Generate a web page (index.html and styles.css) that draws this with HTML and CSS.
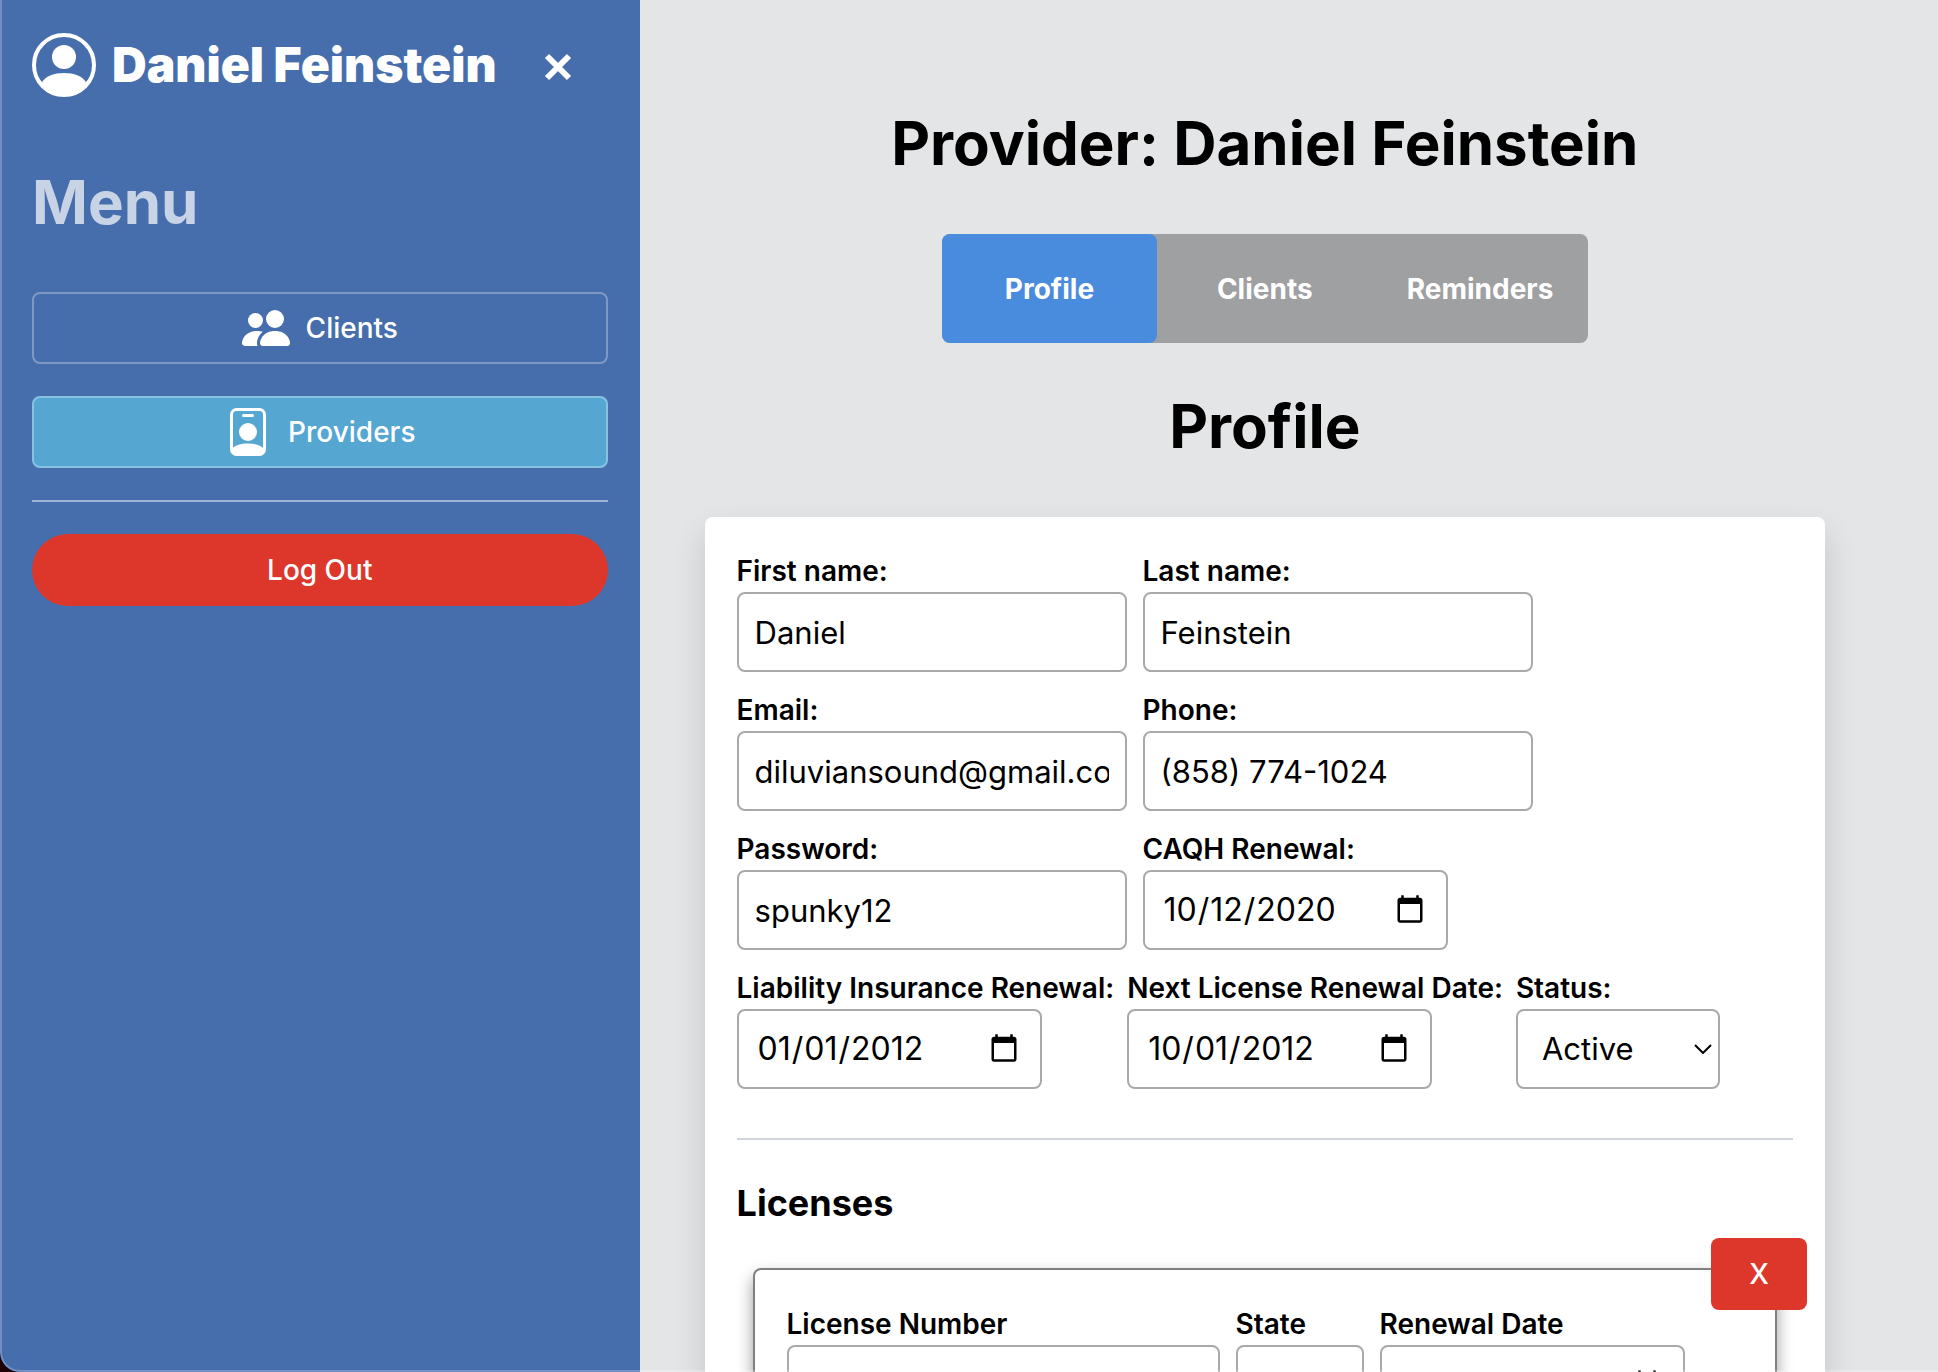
FILE: index.html
```
<!DOCTYPE html>
<html lang="en">
<head>
<meta charset="utf-8">
<meta name="viewport" content="width=device-width, initial-scale=1">
<title>Provider: Daniel Feinstein</title>
<link rel="stylesheet" href="styles.css">
</head>
<body>
<div class="app">
  <aside class="sidebar">
    <header class="account">
      <svg class="account-icon" viewBox="0 0 64 64" aria-hidden="true">
        <circle cx="32" cy="32" r="30" fill="none" stroke="currentColor" stroke-width="4"/>
        <circle cx="32" cy="24" r="12" fill="currentColor"/>
        <path d="M10 49C14 43 22 40 32 40s18 3 22 9C49 58 41 63 32 63S15 58 10 49z" fill="currentColor"/>
      </svg>
      <p class="account-name">Daniel Feinstein</p>
      <button class="close" type="button" aria-label="Close menu">
        <svg viewBox="0 0 28 32" aria-hidden="true"><path d="M3 7l22 22M25 7L3 29" stroke="currentColor" stroke-width="6" fill="none"/></svg>
      </button>
    </header>
    <h2 class="menu-title">Menu</h2>
    <nav class="menu">
      <a class="menu-item" href="#clients">
        <svg class="icon" viewBox="0 0 48 48" aria-hidden="true" fill="currentColor">
          <circle cx="33" cy="15" r="9"/>
          <circle cx="13.500" cy="16.500" r="7.500"/>
          <path d="M21 42s-3 0-3-3 3-12 15-12 15 9 15 12-3 3-3 3z"/>
          <path d="M15.600 42A6 6 0 0 1 15 39c0-4 2-8.300 5.800-11.300A15 15 0 0 0 15 27C3 27 0 36 0 39s3 3 3 3z"/>
        </svg>
        <span>Clients</span>
      </a>
      <a class="menu-item active" href="#providers" aria-current="page">
        <svg class="icon" viewBox="-6 0 48 48" aria-hidden="true">
          <rect x="1.500" y="1.500" width="33" height="45" rx="5" fill="none" stroke="currentColor" stroke-width="3"/>
          <rect x="12" y="6" width="12" height="3" rx="1.500" fill="currentColor"/>
          <circle cx="18" cy="24" r="9" fill="currentColor"/>
          <path d="M2 41c3-4 9-5.500 16-5.500S31 37 34 41v3l-3 3H5l-3-3z" fill="currentColor"/>
        </svg>
        <span>Providers</span>
      </a>
    </nav>
    <hr class="menu-rule">
    <button class="logout" type="button">Log Out</button>
  </aside>

  <main class="main">
    <h1 class="title">Provider: Daniel Feinstein</h1>
    <div class="tabs" role="tablist">
      <button class="tab selected" type="button" role="tab" aria-selected="true">Profile</button>
      <button class="tab" type="button" role="tab" aria-selected="false">Clients</button>
      <button class="tab" type="button" role="tab" aria-selected="false">Reminders</button>
    </div>
    <h2 class="title">Profile</h2>
    <form class="card">
      <div class="row">
        <div class="field"><label for="first">First name:</label><input class="control text" id="first" type="text" value="Daniel"></div>
        <div class="field"><label for="last">Last name:</label><input class="control text" id="last" type="text" value="Feinstein"></div>
      </div>
      <div class="row">
        <div class="field"><label for="email">Email:</label><input class="control text" id="email" type="email" value="diluviansound@gmail.com"></div>
        <div class="field"><label for="phone">Phone:</label><input class="control text" id="phone" type="tel" value="(858) 774-1024"></div>
      </div>
      <div class="row">
        <div class="field"><label for="password">Password:</label><input class="control text" id="password" type="text" value="spunky12"></div>
        <div class="field"><label for="caqh">CAQH Renewal:</label><input class="control date" id="caqh" type="date" value="2020-10-12"></div>
      </div>
      <div class="row row-tight">
        <div class="field"><label for="liability">Liability Insurance Renewal:</label><input class="control date" id="liability" type="date" value="2012-01-01"></div>
        <div class="field"><label for="next">Next License Renewal Date:</label><input class="control date" id="next" type="date" value="2012-10-01"></div>
        <div class="field"><label for="status">Status:</label>
          <div class="select">
            <select class="control" id="status"><option>Active</option><option>Inactive</option></select>
            <svg class="chevron" viewBox="0 0 18 10" aria-hidden="true"><path d="M1 1l8 8 8-8" fill="none" stroke="currentColor" stroke-width="2"/></svg>
          </div>
        </div>
      </div>
      <hr class="rule">
      <h3 class="section-title">Licenses</h3>
      <section class="license">
        <button class="remove" type="button" aria-label="Remove license">X</button>
        <div class="row">
          <div class="field"><label for="number">License Number</label><input class="control number" id="number" type="text"></div>
          <div class="field"><label for="state">State</label><input class="control state" id="state" type="text"></div>
          <div class="field"><label for="renewal">Renewal Date</label><input class="control date" id="renewal" type="date"></div>
        </div>
      </section>
    </form>
  </main>
</div>
</body>
</html>
```
FILE: styles.css
```
* { box-sizing: border-box; }

body {
  margin: 0;
  background: #1d0206;
  color: #000;
  font-family: Inter, "Liberation Sans", sans-serif;
  font-size: 28px;
  line-height: 40px;
}

button, input, select { font: inherit; color: inherit; }
h1, h2, h3, p { margin: 0; }

.app {
  position: relative;
  display: flex;
  height: 100vh;
  overflow: hidden;
  border-bottom-left-radius: 20px;
}

/* light edge of the window */
.app::after {
  content: "";
  position: absolute;
  inset: 0;
  border: solid rgba(255, 255, 255, 0.24);
  border-width: 0 0 2px 2px;
  border-bottom-left-radius: 20px;
  pointer-events: none;
}

.sidebar {
  flex: none;
  width: 33%;
  padding: 32px;
  background: #476eac;
  color: #fff;
  font-weight: 500;
}

.account { display: flex; align-items: center; height: 66px; }
.account-icon { flex: none; width: 64px; height: 64px; }
.account-name { margin-left: 16px; font-size: 48px; font-weight: 900; white-space: nowrap; }
.close { display: flex; margin: 0 36px 0 auto; padding: 0; border: 0; background: none; }
.close svg { width: 28px; height: 32px; }

.menu-title {
  margin: 64px 0 50px;
  color: #c8d3e6;
  font-size: 60px;
  font-weight: 700;
  line-height: 80px;
}

.menu { display: flex; flex-direction: column; gap: 32px; }
.menu-item {
  display: flex;
  align-items: center;
  justify-content: center;
  gap: 16px;
  height: 72px;
  border: 2px solid #7e99c5;
  border-radius: 8px;
  color: #fff;
  text-decoration: none;
}
.menu-item.active { background: #56a6d2; border-color: #89c1e0; }
.icon { width: 48px; height: 48px; }

.menu-rule { height: 2px; margin: 32px 0; border: 0; background: #9fb3d5; }
.logout {
  display: block;
  width: 100%;
  height: 72px;
  border: 0;
  border-radius: 36px;
  background: #dd372c;
}

.main {
  flex: 1;
  min-width: 0;
  padding: 103px 113px 0 65px;
  overflow-y: auto;
  scrollbar-width: none;
  background: #e4e5e7;
}

.title { font-size: 60px; font-weight: 700; line-height: 80px; text-align: center; }

.tabs {
  display: grid;
  grid-template-columns: repeat(3, 1fr);
  width: 646px;
  max-width: 100%;
  height: 109px;
  margin: 51px auto 43px;
  border-radius: 8px;
  background: #9fa0a2;
}
.tab { padding: 0; border: 0; border-radius: 8px; background: none; color: #fff; font-weight: 700; }
.tab.selected { background: #498cde; }

.card {
  margin-top: 51px;
  padding: 32px 32px 64px;
  border-radius: 8px;
  background: #fff;
  box-shadow: 0 16px 32px rgba(0, 0, 0, 0.14);
}

.row { display: flex; flex-wrap: wrap; gap: 16px; margin-bottom: 16px; }
.row-tight { column-gap: 13px; }
.field { display: flex; flex-direction: column; align-items: flex-start; gap: 1px; }
.field label { height: 42px; font-weight: 600; line-height: 44px; }

.control {
  height: 80px;
  padding: 0 16px;
  border: 2px solid #a9a9a9;
  border-radius: 8px;
  background: #fff;
  font-size: 31px;
}
.text { width: 390px; }
.date { width: 305px; padding: 0 18px; font-size: 32px; }
.number { width: 433px; }
.state { width: 128px; }

.select { position: relative; }
.select .control { width: 204px; padding: 0 24px; appearance: none; }
.chevron { position: absolute; right: 8px; top: 35px; width: 18px; height: 10px; pointer-events: none; }

.rule { height: 2px; margin: 49px 0 41px; border: 0; background: #ced4da; }
.section-title { font-size: 36px; font-weight: 700; line-height: 44px; }

.license {
  position: relative;
  margin: 43px 16px 0;
  padding: 32px;
  border: 2px solid #808080;
  border-radius: 8px;
  box-shadow: 0 8px 16px rgba(0, 0, 0, 0.4);
}
.remove {
  position: absolute;
  top: -32px;
  right: -32px;
  width: 96px;
  height: 72px;
  border: 0;
  border-radius: 8px;
  background: #dd372c;
  color: #fff;
  font-weight: 500;
}
```
